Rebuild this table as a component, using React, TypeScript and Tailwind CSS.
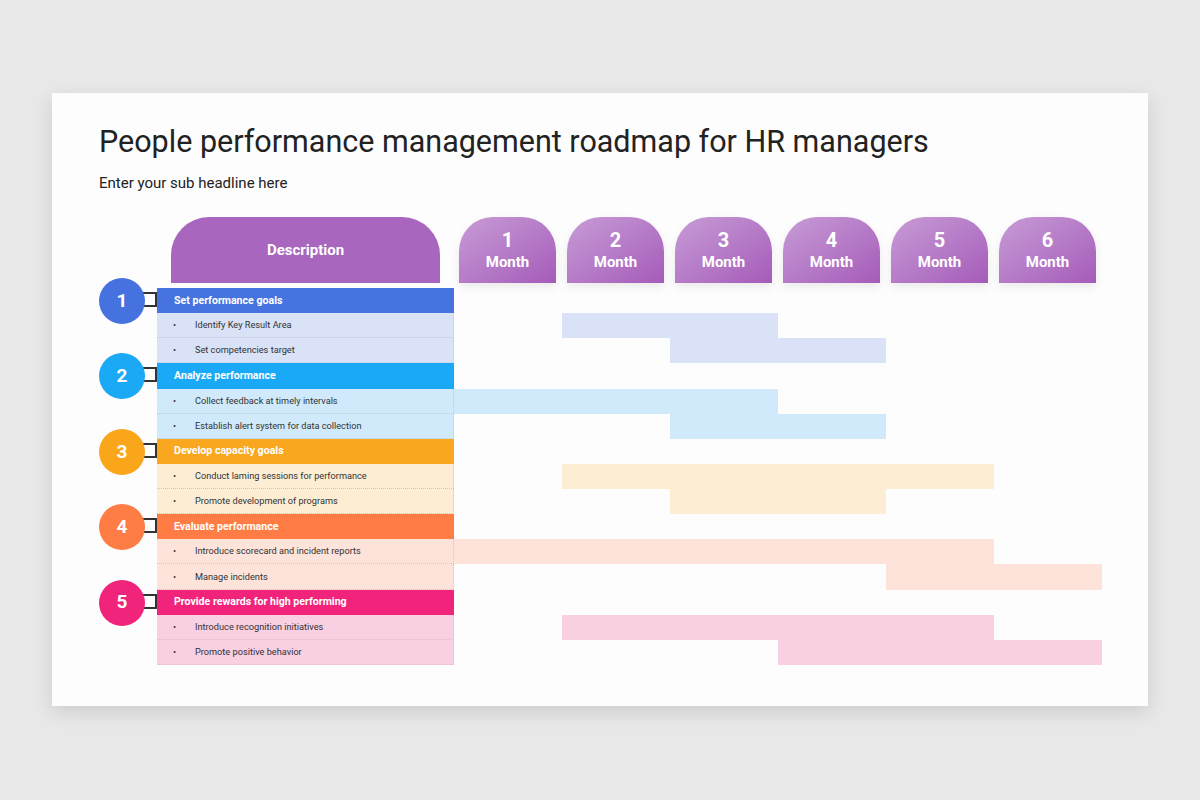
import React from 'react';

type Item = { text: string; bar: string };
type Phase = {
  n: number;
  title: string;
  dark: string;
  light: string;
  items: Item[];
};

// bar spans are written out in full so Tailwind picks them up
const phases: Phase[] = [
  {
    n: 1,
    title: 'Set performance goals',
    dark: 'bg-[#4673e0]',
    light: 'bg-[#d9e2f6]',
    items: [
      { text: 'Identify Key Result Area', bar: 'col-start-2 col-end-4' },
      { text: 'Set competencies target', bar: 'col-start-3 col-end-5' },
    ],
  },
  {
    n: 2,
    title: 'Analyze performance',
    dark: 'bg-[#1aa9f6]',
    light: 'bg-[#d0eafb]',
    items: [
      { text: 'Collect feedback at timely intervals', bar: 'col-start-1 col-end-4' },
      { text: 'Establish alert system for data collection', bar: 'col-start-3 col-end-5' },
    ],
  },
  {
    n: 3,
    title: 'Develop capacity goals',
    dark: 'bg-[#f9a71e]',
    light: 'bg-[#fdedd3]',
    items: [
      { text: 'Conduct laming sessions for performance', bar: 'col-start-2 col-end-6' },
      { text: 'Promote development of programs', bar: 'col-start-3 col-end-5' },
    ],
  },
  {
    n: 4,
    title: 'Evaluate performance',
    dark: 'bg-[#ff7d45]',
    light: 'bg-[#fde3da]',
    items: [
      { text: 'Introduce scorecard and incident reports', bar: 'col-start-1 col-end-6' },
      { text: 'Manage incidents', bar: 'col-start-5 col-end-7' },
    ],
  },
  {
    n: 5,
    title: 'Provide rewards for high performing',
    dark: 'bg-[#f2237a]',
    light: 'bg-[#f9cfe2]',
    items: [
      { text: 'Introduce recognition initiatives', bar: 'col-start-2 col-end-6' },
      { text: 'Promote positive behavior', bar: 'col-start-4 col-end-7' },
    ],
  },
];

const circleColor: Record<number, string> = {
  1: 'bg-[#4572de]',
  2: 'bg-[#1ba9f5]',
  3: 'bg-[#f9a61b]',
  4: 'bg-[#fe7d45]',
  5: 'bg-[#f0247a]',
};

const months = [1, 2, 3, 4, 5, 6];

export default function App() {
  return (
    <div className="min-h-[800px] w-[1200px] bg-[#e9e8e9] pt-[93px] pl-[52px] font-['Roboto',sans-serif]">
      <div className="w-[1096px] h-[613px] bg-[#fdfdfd] shadow-[0_6px_18px_rgba(0,0,0,0.12)] pl-[47px] pt-[31px]">
        {/* Heading */}
        <h1 className="text-[30.5px] leading-[36px] text-[#222222]">
          People performance management roadmap for HR managers
        </h1>
        <p className="mt-[13px] text-[15px] leading-[20px] text-[#222222]">Enter your sub headline here</p>

        {/* Column headers */}
        <div className="mt-[24px] flex h-[66px]">
          <div className="w-[58px]" />
          <div className="w-[297px] px-[14px]">
            <div className="h-full rounded-t-[38px] bg-[#a966bf] flex items-center justify-center text-white font-bold text-[15px]">
              Description
            </div>
          </div>
          <div className="w-[648px] grid grid-cols-6">
            {months.map((m) => (
              <div key={m} className="pl-[5px] pr-[6px]">
                <div className="h-full rounded-t-[34px] bg-gradient-to-br from-[#c79cd6] to-[#a55bb9] shadow-[0_4px_10px_rgba(0,0,0,0.08)] flex flex-col items-center justify-center text-white font-bold">
                  <span className="text-[20px] leading-[24px]">{m}</span>
                  <span className="text-[15px] leading-[20px]">Month</span>
                </div>
              </div>
            ))}
          </div>
        </div>

        {/* Rows */}
        <div className="mt-[5px]">
          {phases.map((p) => (
            <div key={p.n}>
              <div className="flex h-[25.13px]">
                <div className="w-[58px] relative">
                  <div className="absolute left-[30px] top-[4px] w-[28px] h-[15px] border-2 border-[#333333]" />
                  <div
                    className={`absolute left-0 top-[-10px] w-[46px] h-[46px] rounded-full ${circleColor[p.n]} flex items-center justify-center text-white font-bold text-[19px] z-10`}
                  >
                    {p.n}
                  </div>
                </div>
                <div className={`w-[297px] ${p.dark} flex items-center pl-[17px] text-white font-bold text-[10.6px]`}>
                  {p.title}
                </div>
                <div className="w-[648px]" />
              </div>
              {p.items.map((it) => (
                <div key={it.text} className="flex h-[25.13px]">
                  <div className="w-[58px]" />
                  <div
                    className={`w-[297px] ${p.light} flex items-center text-[9.2px] text-[#333333] border-b border-r border-dotted border-[#c8c8c8]`}
                  >
                    <span className="w-[38px] pl-[16px]">•</span>
                    <span>{it.text}</span>
                  </div>
                  <div className="w-[648px] grid grid-cols-6">
                    <div className={`${it.bar} ${p.light}`} />
                  </div>
                </div>
              ))}
            </div>
          ))}
        </div>
      </div>
    </div>
  );
}
